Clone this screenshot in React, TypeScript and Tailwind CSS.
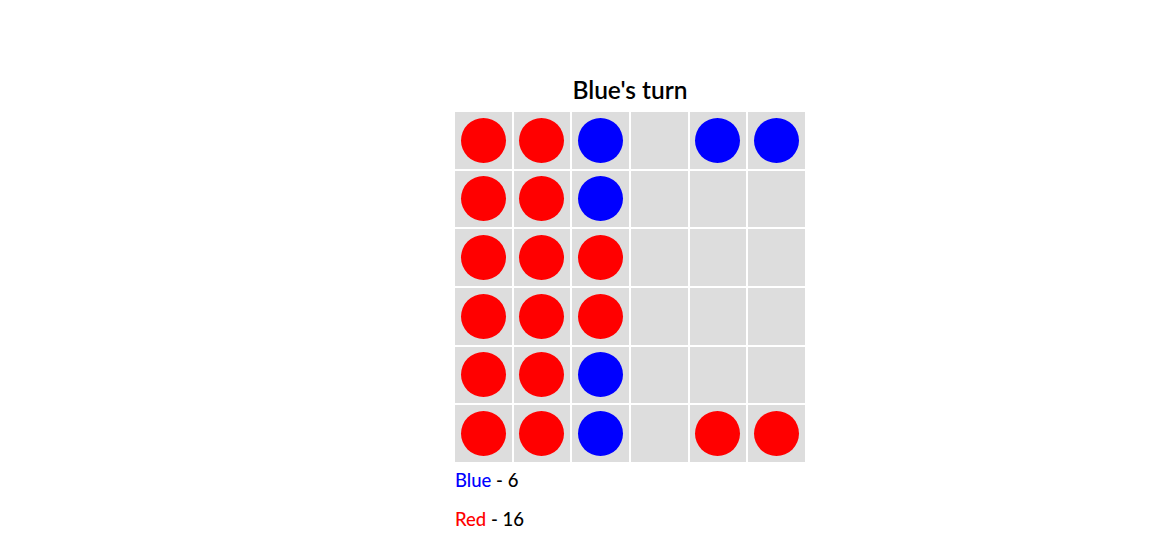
const board = [
  ['R', 'R', 'B', '', 'B', 'B'],
  ['R', 'R', 'B', '', '', ''],
  ['R', 'R', 'R', '', '', ''],
  ['R', 'R', 'R', '', '', ''],
  ['R', 'R', 'B', '', '', ''],
  ['R', 'R', 'B', '', 'R', 'R'],
];

function Cell({ piece }: { piece: string }) {
  return (
    <div className="flex items-center justify-center bg-[#dddddd]">
      {piece === 'R' && <div className="h-[45px] w-[45px] rounded-full bg-[#ff0000]" />}
      {piece === 'B' && <div className="h-[45px] w-[45px] rounded-full bg-[#0000ff]" />}
    </div>
  );
}

export default function App() {
  const blue = 6;
  const red = 16;

  return (
    <div className="min-h-[541px] bg-white pt-[76px] pl-[455px] font-['Lato',sans-serif] font-medium text-black">
      <div className="w-[350px]">
        <h2 className="mb-[8px] text-center text-[24.5px] font-semibold leading-[28px]">Blue's turn</h2>
        <div className="grid h-[350px] grid-cols-6 grid-rows-6 gap-[2px]">
          {board.map((row, r) =>
            row.map((p, c) => <Cell key={`${r}-${c}`} piece={p} />)
          )}
        </div>
        <p className="mt-[6px] text-[18.5px] leading-[24px]">
          <span className="text-[#0000ff]">Blue</span> - {blue}
        </p>
        <p className="mt-[15px] text-[18.5px] leading-[24px]">
          <span className="text-[#ff0000]">Red</span> - {red}
        </p>
      </div>
    </div>
  );
}
